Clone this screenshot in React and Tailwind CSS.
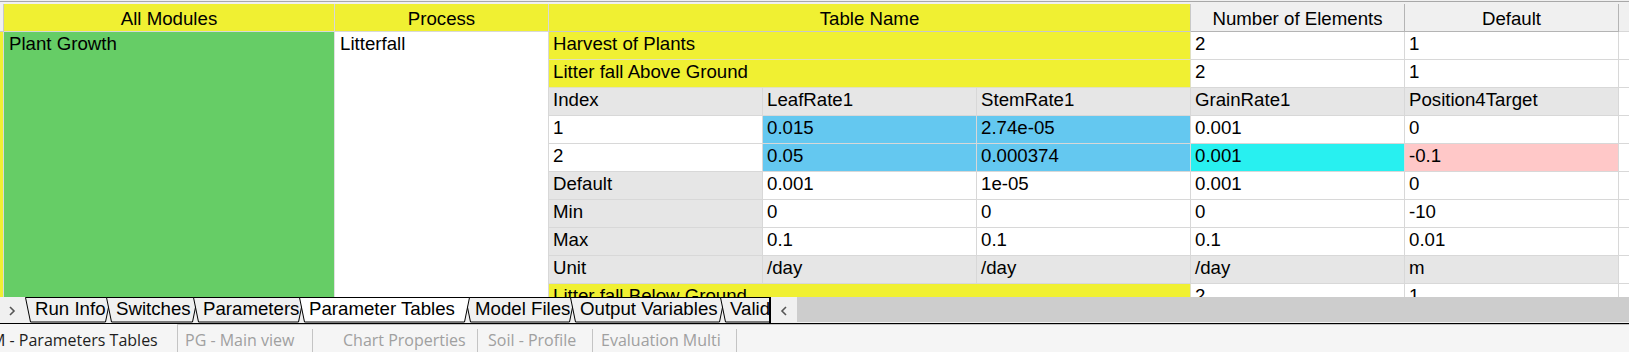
import React from 'react';

// colours picked off the screenshot
const YEL = 'bg-[#f0f032]';
const WHT = 'bg-white';
const GRY = 'bg-[#e6e6e6]';
const BLU = 'bg-[#64c8f0]';
const CYN = 'bg-[#28f0f0]';
const PNK = 'bg-[#ffc8c8]';

const cell = 'h-[28px] px-[4px] leading-[24px] whitespace-nowrap overflow-hidden border-r border-b border-[#d8d8d8]';
const head = 'h-[28px] leading-[29px] text-center whitespace-nowrap overflow-hidden border-r border-b';

// rows to the right of the Process column (Table Name area)
const rows = [
    { name: 'Harvest of Plants', n: '2', def: '1' },
    { name: 'Litter fall Above Ground', n: '2', def: '1' },
    { cells: [['Index', GRY], ['LeafRate1', GRY], ['StemRate1', GRY], ['GrainRate1', GRY], ['Position4Target', GRY]] },
    { cells: [['1', WHT], ['0.015', BLU], ['2.74e-05', BLU], ['0.001', WHT], ['0', WHT]] },
    { cells: [['2', WHT], ['0.05', BLU], ['0.000374', BLU], ['0.001', CYN], ['-0.1', PNK]] },
    { cells: [['Default', GRY], ['0.001', WHT], ['1e-05', WHT], ['0.001', WHT], ['0', WHT]] },
    { cells: [['Min', GRY], ['0', WHT], ['0', WHT], ['0', WHT], ['-10', WHT]] },
    { cells: [['Max', GRY], ['0.1', WHT], ['0.1', WHT], ['0.1', WHT], ['0.01', WHT]] },
    { cells: [['Unit', GRY], ['/day', GRY], ['/day', GRY], ['/day', GRY], ['m', GRY]] },
    { name: 'Litter fall Below Ground', n: '2', def: '1' },
];

const tabs = [
    { label: 'Run Info', w: 'w-[86px]', pts: '0.5,0.5 85.5,0.5 80.5,25 5.5,25' },
    { label: 'Switches', w: 'w-[92px]', pts: '0.5,0.5 91.5,0.5 86.5,25 5.5,25' },
    { label: 'Parameters', w: 'w-[111px]', pts: '0.5,0.5 110.5,0.5 105.5,25 5.5,25' },
    { label: 'Parameter Tables', w: 'w-[171px]', pts: '0.5,0.5 170.5,0.5 165.5,25 5.5,25', active: true },
    { label: 'Model Files', w: 'w-[110px]', pts: '0.5,0.5 109.5,0.5 104.5,25 5.5,25' },
    { label: 'Output Variables', w: 'w-[155px]', pts: '0.5,0.5 154.5,0.5 149.5,25 5.5,25' },
    { label: 'Validation', w: 'w-[120px]', pts: '0.5,0.5 119.5,0.5 114.5,25 5.5,25' },
];

const docTabs = [
    { label: 'PG - Main view', cls: 'w-[135px] pl-[7px]' },
    { label: 'Chart Properties', cls: 'w-[165px] pl-[30px]' },
    { label: 'Soil - Profile', cls: 'w-[115px] pl-[10px]' },
    { label: 'Evaluation Multi', cls: 'w-[144px] pl-[8px]' },
];

const Chevron = ({ left }) => (
    <svg width="8" height="10" viewBox="0 0 8 10" className="shrink-0">
        <polyline
            points={left ? '6,1 2,5 6,9' : '2,1 6,5 2,9'}
            fill="none"
            stroke="#555"
            strokeWidth="1.6"
        />
    </svg>
);

const Tab = ({ label, w, pts, active, first }) => (
    <div className={`relative shrink-0 h-[26px] ${w} ${first ? '' : '-ml-[5px]'} ${active ? 'z-10' : ''}`}>
        <svg className="absolute inset-0 w-full h-full">
            <polygon points={pts} fill={active ? '#ffffff' : '#f0f0f0'} stroke="#000" strokeWidth="1" />
        </svg>
        <span className="relative block pl-[10px] leading-[24px] whitespace-nowrap">{label}</span>
    </div>
);

const App = () => {
    return (
        <div className="w-[1629px] h-[352px] overflow-hidden bg-[#f0f0f0] flex flex-col font-['Liberation_Sans',Arial,sans-serif] text-[18.67px] text-black">
            {/* thin frame line above the grid */}
            <div className="mt-[1px] h-[3px] shrink-0 border-t border-[#a8a8a8]" />

            {/* grid */}
            <div className="h-[293px] shrink-0 overflow-hidden bg-white">
                <div className="grid grid-cols-[4px_331px_214px_214px_214px_214px_214px_214px_10px] auto-rows-[28px]">
                    {/* header */}
                    <div className="h-[28px] bg-[#f0f0f0] border-r border-b border-[#c8c8c8]" />
                    <div className={`${head} ${YEL} border-[#d8d8d8]`}>All Modules</div>
                    <div className={`${head} ${YEL} border-[#d8d8d8]`}>Process</div>
                    <div className={`${head} ${YEL} col-span-3 border-[#c8c8c8]`}>Table Name</div>
                    <div className={`${head} bg-[#f0f0f0] border-[#b4b4b4]`}>Number of Elements</div>
                    <div className={`${head} bg-[#f0f0f0] border-[#b4b4b4]`}>Default</div>
                    <div className="h-[28px] bg-[#f0f0f0] border-b border-[#d8d8d8]" />

                    {/* spanning cells */}
                    <div className={`col-start-1 row-start-2 row-span-10 ${YEL} border-r border-[#d8d8d8]`} />
                    <div className="col-start-2 row-start-2 row-span-10 bg-[#66cd66] px-[5px] leading-[24px] border-r border-[#e0e0e0]">
                        Plant Growth
                    </div>
                    <div className="col-start-3 row-start-2 row-span-10 bg-white px-[5px] leading-[24px] border-r border-[#d8d8d8]">
                        Litterfall
                    </div>

                    {rows.map((r, i) =>
                        r.cells ? (
                            <React.Fragment key={i}>
                                {r.cells.map(([t, bg], j) => (
                                    <div key={j} className={`${cell} ${bg}`}>{t}</div>
                                ))}
                                <div className="h-[28px] bg-white border-b border-[#d8d8d8]" />
                            </React.Fragment>
                        ) : (
                            <React.Fragment key={i}>
                                <div className={`${cell} ${YEL} col-span-3 border-[#e0e0c0]`}>{r.name}</div>
                                <div className={`${cell} ${WHT}`}>{r.n}</div>
                                <div className={`${cell} ${WHT}`}>{r.def}</div>
                                <div className="h-[28px] bg-white border-b border-[#d8d8d8]" />
                            </React.Fragment>
                        )
                    )}
                </div>
            </div>

            {/* sheet tabs + horizontal scrollbar */}
            <div className="h-[26px] shrink-0 flex bg-[#f0f0f0]">
                <div className="w-[769px] shrink-0 flex overflow-hidden">
                    <div className="w-[25px] shrink-0 flex items-center pl-[8px] pt-[2px]">
                        <Chevron />
                    </div>
                    {tabs.map((t, i) => (
                        <Tab key={t.label} {...t} first={i === 0} />
                    ))}
                </div>
                <div className="w-[2px] shrink-0 bg-black" />
                <div className="w-[26px] shrink-0 flex items-center pl-[9px] pt-[2px]">
                    <Chevron left />
                </div>
                <div className="flex-1 h-[25px] bg-[#cdcdcd]" />
            </div>
            <div className="h-px shrink-0 bg-black" />

            {/* document tabs */}
            <div className="h-[28px] shrink-0 flex bg-[#f5f5f5] font-['Open_Sans',sans-serif] text-[16px]">
                <div className="w-[177px] shrink-0 overflow-hidden whitespace-nowrap leading-[28px] pt-[2px] text-[#1e1e1e]">
                    <span className="-ml-[9px] inline-block">M - Parameters Tables</span>
                </div>
                <div className="flex-1 flex border-l border-t border-[#c4c4c4]">
                    {docTabs.map((t) => (
                        <div key={t.label} className={`${t.cls} shrink-0 flex items-end`}>
                            <div className="flex-1 h-[23px] border-r border-[#c4c4c4] leading-[22px] text-[#a0a0a0] whitespace-nowrap">
                                {t.label}
                            </div>
                        </div>
                    ))}
                </div>
            </div>
        </div>
    );
};

export default App;
